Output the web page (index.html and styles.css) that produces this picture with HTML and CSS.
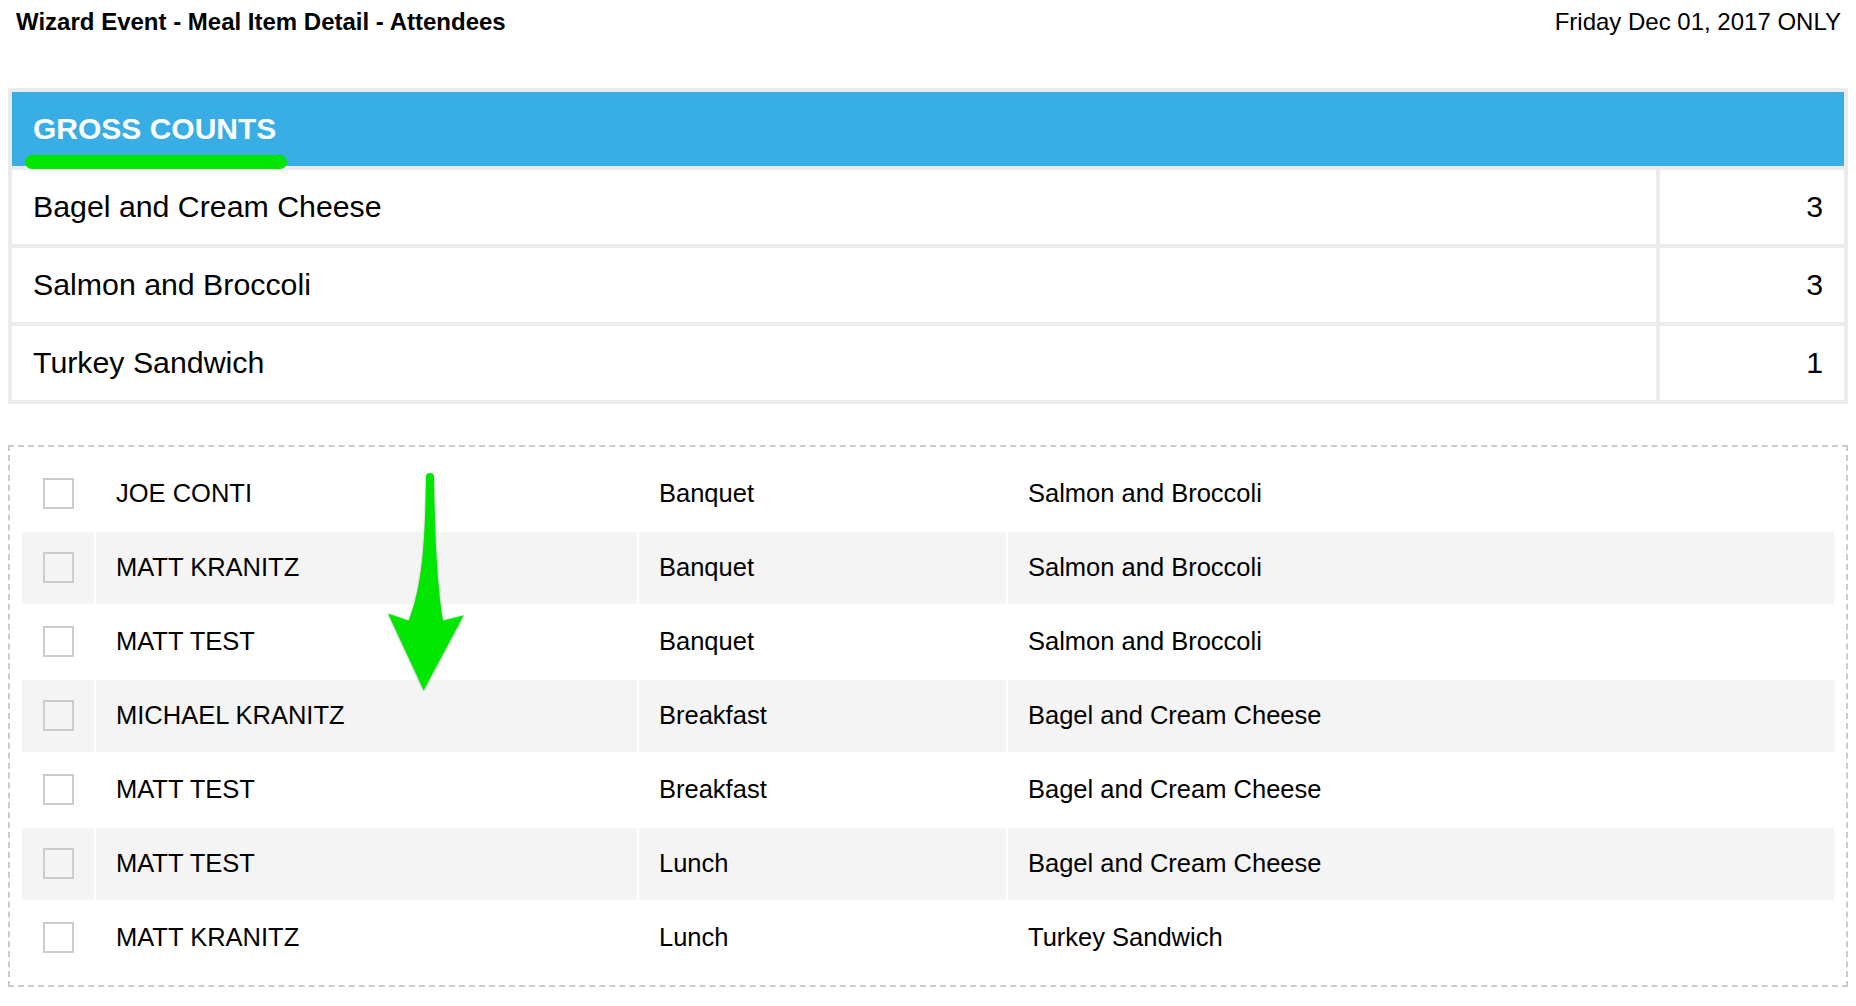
FILE: index.html
```html
<!DOCTYPE html>
<html lang="en">
<head>
    <meta charset="UTF-8">
    <meta name="viewport" content="width=device-width, initial-scale=1.0">
    <title>Wizard Event - Meal Item Detail - Attendees</title>
    <link rel="stylesheet" href="styles.css">
</head>
<body>
    <div class="page-header">
        <div class="page-title">Wizard Event - Meal Item Detail - Attendees</div>
        <div class="page-date">Friday Dec 01, 2017 ONLY</div>
    </div>

    <div class="counts-box">
        <div class="counts-head">
            GROSS COUNTS
            <span class="mark-line"></span>
        </div>
        <div class="counts-row">
            <div class="count-name">Bagel and Cream Cheese</div>
            <div class="count-num">3</div>
        </div>
        <div class="counts-row">
            <div class="count-name">Salmon and Broccoli</div>
            <div class="count-num">3</div>
        </div>
        <div class="counts-row">
            <div class="count-name">Turkey Sandwich</div>
            <div class="count-num">1</div>
        </div>
    </div>

    <div class="attendees">
        <div class="att-row">
            <div class="att-check"><input type="checkbox"></div>
            <div class="att-cell">JOE CONTI</div>
            <div class="att-cell">Banquet</div>
            <div class="att-cell">Salmon and Broccoli</div>
        </div>
        <div class="att-row">
            <div class="att-check"><input type="checkbox"></div>
            <div class="att-cell">MATT KRANITZ</div>
            <div class="att-cell">Banquet</div>
            <div class="att-cell">Salmon and Broccoli</div>
        </div>
        <div class="att-row">
            <div class="att-check"><input type="checkbox"></div>
            <div class="att-cell">MATT TEST</div>
            <div class="att-cell">Banquet</div>
            <div class="att-cell">Salmon and Broccoli</div>
        </div>
        <div class="att-row">
            <div class="att-check"><input type="checkbox"></div>
            <div class="att-cell">MICHAEL KRANITZ</div>
            <div class="att-cell">Breakfast</div>
            <div class="att-cell">Bagel and Cream Cheese</div>
        </div>
        <div class="att-row">
            <div class="att-check"><input type="checkbox"></div>
            <div class="att-cell">MATT TEST</div>
            <div class="att-cell">Breakfast</div>
            <div class="att-cell">Bagel and Cream Cheese</div>
        </div>
        <div class="att-row">
            <div class="att-check"><input type="checkbox"></div>
            <div class="att-cell">MATT TEST</div>
            <div class="att-cell">Lunch</div>
            <div class="att-cell">Bagel and Cream Cheese</div>
        </div>
        <div class="att-row">
            <div class="att-check"><input type="checkbox"></div>
            <div class="att-cell">MATT KRANITZ</div>
            <div class="att-cell">Lunch</div>
            <div class="att-cell">Turkey Sandwich</div>
        </div>

        <!-- annotation arrow -->
        <svg class="mark-arrow" width="90" height="235" viewBox="0 0 90 235">
            <path d="M44 11 C43 80 40 120 26.7 154.5 L6 147.5 L41.7 224.3 L81.7 149.3 L61 154.5 C56 125 53 80 52 11 A4 4 0 0 0 44 11 Z" fill="#00e600"/>
        </svg>
    </div>
</body>
</html>
```

FILE: styles.css
```css
body {
    font-family: "Liberation Sans", Arial, Helvetica, sans-serif;
    color: #000;
    background-color: #fff;
    margin: 0;
}
.page-header {
    display: flex;
    justify-content: space-between;
    padding: 8px 15px 0 16px;
    font-size: 24px;
}
.page-title {
    font-weight: bold;
}

/* gross counts panel */
.counts-box {
    margin: 52px 8px 0;
    padding: 4px;
    background-color: #ececec;
    display: flex;
    flex-direction: column;
    gap: 4px;
}
.counts-head {
    position: relative;
    height: 74px;
    display: flex;
    align-items: center;
    padding-left: 21px;
    background-color: #38aee4;
    color: #fff;
    font-size: 30px;
    font-weight: bold;
}
.mark-line {
    position: absolute;
    left: 13px;
    top: 63px;
    width: 262px;
    height: 14px;
    border-radius: 7px;
    background-color: #00e600;
}
.counts-row {
    display: grid;
    grid-template-columns: 1fr 184px;
    gap: 4px;
    height: 74px;
    font-size: 30.3px;
}
.count-name, .count-num {
    background-color: #fff;
    display: flex;
    align-items: center;
    padding: 0 21px;
}
.count-num {
    justify-content: flex-end;
}

/* attendee list */
.attendees {
    position: relative;
    margin: 41px 8px 0;
    padding: 11px 11px 11px 12px;
    border: 2px dashed #cccccc;
    display: flex;
    flex-direction: column;
    gap: 2.5px;
}
.att-row {
    display: grid;
    grid-template-columns: 72px 541px 367px 1fr;
    column-gap: 2px;
    height: 71.5px;
    font-size: 25.5px;
}
.att-row:nth-child(even) > div {
    background-color: #f4f4f4;
}
.att-check {
    display: flex;
    align-items: center;
    justify-content: center;
}
.att-check input {
    appearance: none;
    -webkit-appearance: none;
    margin: 0;
    width: 31px;
    height: 31px;
    border: 2px solid #cccccc;
    background: transparent;
}
.att-cell {
    display: flex;
    align-items: center;
    padding-left: 20px;
}
.mark-arrow {
    position: absolute;
    left: 372px;
    top: 19px;
    filter: drop-shadow(0 1px 1px rgba(0, 0, 0, 0.3));
}
```
